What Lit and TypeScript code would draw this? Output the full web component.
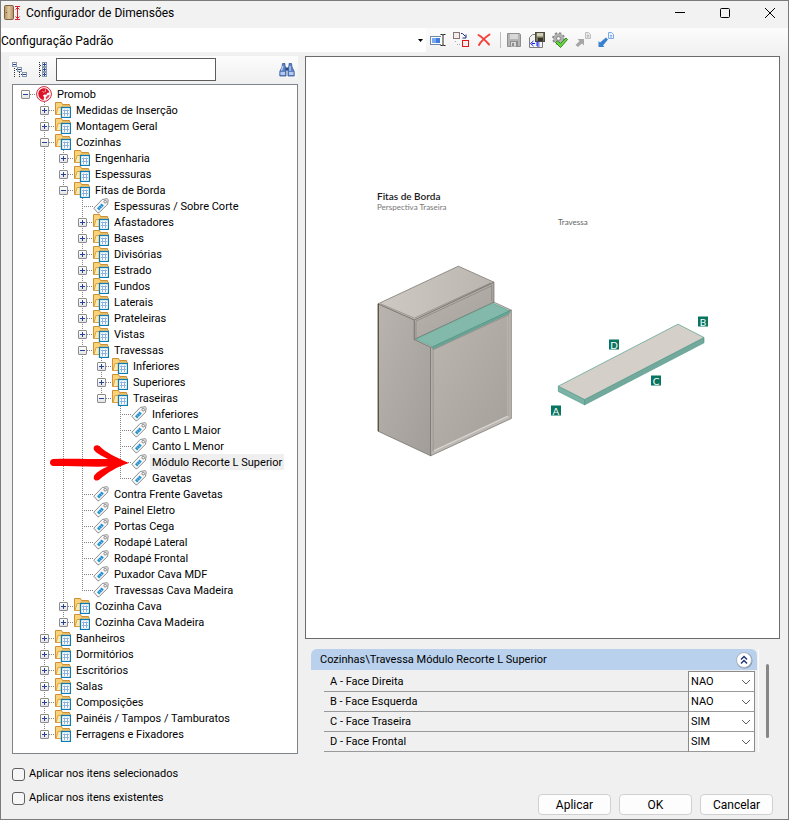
import { LitElement, html, css, svg, nothing } from "lit";
import { customElement, property, state } from "lit/decorators.js";

interface TreeNode {
  label: string;
  kind?: "root" | "folder" | "tag";
  open?: boolean;
  marked?: boolean;
  children?: TreeNode[];
}

const folder = (label: string): TreeNode => ({ label, kind: "folder" });
const group = (label: string, children: TreeNode[]): TreeNode => ({ label, kind: "folder", open: true, children });
const tag = (label: string, marked = false): TreeNode => ({ label, kind: "tag", marked });

const TREE: TreeNode = {
  label: "Promob",
  kind: "root",
  open: true,
  children: [
    folder("Medidas de Inserção"),
    folder("Montagem Geral"),
    group("Cozinhas", [
      folder("Engenharia"),
      folder("Espessuras"),
      group("Fitas de Borda", [
        tag("Espessuras / Sobre Corte"),
        folder("Afastadores"),
        folder("Bases"),
        folder("Divisórias"),
        folder("Estrado"),
        folder("Fundos"),
        folder("Laterais"),
        folder("Prateleiras"),
        folder("Vistas"),
        group("Travessas", [
          folder("Inferiores"),
          folder("Superiores"),
          group("Traseiras", [
            tag("Inferiores"),
            tag("Canto L Maior"),
            tag("Canto L Menor"),
            tag("Módulo Recorte L Superior", true),
            tag("Gavetas"),
          ]),
        ]),
        tag("Contra Frente Gavetas"),
        tag("Painel Eletro"),
        tag("Portas Cega"),
        tag("Rodapé Lateral"),
        tag("Rodapé Frontal"),
        tag("Puxador Cava MDF"),
        tag("Travessas Cava Madeira"),
      ]),
      folder("Cozinha Cava"),
      folder("Cozinha Cava Madeira"),
    ]),
    folder("Banheiros"),
    folder("Dormitórios"),
    folder("Escritórios"),
    folder("Salas"),
    folder("Composições"),
    folder("Painéis / Tampos / Tamburatos"),
    folder("Ferragens e Fixadores"),
  ],
};

const icon = (body: unknown, w = 16, h = 16) =>
  html`<svg width=${w} height=${h} viewBox="0 0 ${w} ${h}" aria-hidden="true">${body}</svg>`;

const folderArt = svg`
  <path d="M.5 12.500V.5h6l1 2h7v10z" fill="#f9d27a" stroke="#cf8f33"/>
  <path d="M1 12.500L3 5.500h3.500l1-1.500h8l-1.500 8.500z" fill="#fdeab0" stroke="#dba345"/>
  <rect x="6.500" y="5.500" width="9" height="10" fill="#fff" stroke="#0f7bb3" stroke-width="1.300"/>
  <path d="M8 8.500h6M8 11.500h6M9.500 7.500v6.500M12.500 7.500v6.500" stroke="#8fb2dd"/>`;

const tagArt = svg`
  <path d="M.8 10.200L9.200 1.500l5-.8 1 .9-.6 4.600L6.200 14.600 4.800 14.800z" fill="#f8f8f8" stroke="#8b8b8b" stroke-linejoin="round"/>
  <path d="M4 10.300l4.600-4.700 2.200 2-4.700 4.800z" fill="#2291cf"/>
  <path d="M5.600 8.800l2 2.200M7.200 7.200l2 2.100" stroke="#a9d8f2" stroke-width=".6"/>
  <rect x="11" y="2.500" width="2.400" height="2.400" rx=".8" fill="#fff" stroke="#777" stroke-width=".9"/>`;

const rootArt = svg`
  <circle cx="8" cy="8" r="7.400" fill="#fff" stroke="#cf2236"/>
  <path d="M9 2.200C5 1.800 2.200 4.500 2.300 8c.1 3.300 2.500 5.800 5.400 5.900L8 11 6.800 9.600 8.600 8.600 10.500 8.800 11 7l2.400-.4C13 4.200 11.300 2.500 9 2.200z" fill="#dc1428"/>
  <path d="M6.500 5.500l1.800 1M9.500 3.500l-.3 2.500" stroke="#fff" stroke-width=".7"/>
  <path d="M13.700 8.500l-2.500 1-1.500 2 .2 1.900c2-.8 3.600-2.700 3.800-4.900z" fill="#e2485a"/>`;

@customElement("dimension-node")
class DimensionNode extends LitElement {
  @property({ attribute: false }) node!: TreeNode;
  @property({ type: Boolean, reflect: true }) root = false;
  @state() private open = false;

  static styles = css`
    :host {
      display: block;
      background: repeating-linear-gradient(#848484 0 1px, transparent 1px 2px) 4px 0 / 1px 100% no-repeat;
    }
    :host([last]) { background-size: 1px 9px; }
    :host([root]) { background: none; }
    .row { display: flex; align-items: center; height: 16px; position: relative; }
    .box {
      width: 9px; height: 9px; padding: 0; border: 1px solid #8c8c8c; border-radius: 1px;
      background: linear-gradient(#fff, #e4e4e4); display: grid; place-items: center;
    }
    .twig { height: 1px; width: 6px; background: repeating-linear-gradient(90deg, #848484 0 1px, transparent 1px 2px); }
    .twig.leaf { width: 11px; margin-left: 4px; }
    svg { display: block; flex: none; }
    .label { height: 16px; line-height: 18px; padding: 0 2px; margin-left: 3px; white-space: nowrap; }
    .marked .label { background: #efefef; }
    .kids { margin-left: 19px; }
    .pointer { position: absolute; right: calc(100% + 2px); left: -66px; top: -10px; pointer-events: none; }
  `;

  firstUpdated() {
    this.open = !!this.node.open;
  }

  render() {
    const { node } = this;
    const art = node.kind === "root" ? rootArt : node.kind === "tag" ? tagArt : folderArt;
    const kids = node.children ?? [];
    return html`
      <div class="row ${node.marked ? "marked" : ""}" role="treeitem" aria-selected=${node.marked ? "true" : "false"}>
        ${node.kind === "tag"
          ? html`<span class="twig leaf"></span>`
          : html`<button class="box" aria-label="Expandir ${node.label}" @click=${() => (this.open = !this.open)}>
                ${icon(svg`<path d=${this.open ? "M1 3.500h5" : "M1 3.500h5M3.500 1v5"} stroke="#26439c"/>`, 7, 7)}
              </button><span class="twig"></span>`}
        ${icon(art)}
        <span class="label">${node.label}</span>
        ${node.marked
          ? html`<svg class="pointer" width="80" height="38" viewBox="0 0 80 38" aria-hidden="true">
              <path d="M3 15C25 14 45 15.500 58 15C51 11.500 46 9 44 6C42.500 2.500 46 0 49.500 2C55 8 66 13.500 79 19C67 22.500 57 29 49.500 35.500C46 38 42 35.500 44.500 31C48 27 53 24.500 58 22.500C42 23 22 22 3 22C-1 21.500 -1 15.500 3 15z" fill="#fe0000"/>
            </svg>`
          : nothing}
      </div>
      ${this.open && kids.length
        ? html`<div class="kids" role="group">
            ${kids.map((k, i) => html`<dimension-node .node=${k} ?last=${i === kids.length - 1}></dimension-node>`)}
          </div>`
        : nothing}
    `;
  }
}

const floppy = (body: string, dark: string, light: string) => svg`
  <path d="M1.500 1.500h12l1 1v12h-13z" fill=${body} stroke=${dark}/>
  <rect x="4" y="2" width="8" height="5" fill=${light}/>
  <rect x="4" y="9" width="8" height="5.500" fill=${dark}/>
  <rect x="5" y="10" width="5" height="4.500" fill=${light}/>
  <rect x="6" y="11" width="2" height="3" fill=${dark}/>`;

const TOOLS = [
  { name: "Renomear", art: svg`
    <rect x=".5" y="4.500" width="12" height="8" fill="#fff" stroke="#6f87a3"/>
    <rect x="2" y="6" width="8" height="5" fill="#3f7ee0"/><rect x="2" y="6" width="4" height="5" fill="#78a8ee"/>
    <rect x="11" y="3" width="4" height="10" fill="#fff"/>
    <path d="M10.500 2.500h2l.5 1 .5-1h2M13 3.500v9M10.500 13.500h2l.5-1 .5 1h2" stroke="#222" fill="none"/>` },
  { name: "Copiar", art: svg`
    <rect x=".5" y=".5" width="6" height="6" fill="#f3eeee" stroke="#8a7474"/>
    <rect x="9.500" y="8.500" width="6" height="6" fill="#f7eeee" stroke="#e01818"/>
    <path d="M8 1.500h1.500l3 3M13 2.500v3.500h-3.500" stroke="#18327e" fill="none"/>
    <path d="M2.500 9v2M4 12.500h3" stroke="#aaa" stroke-dasharray="1 1"/>` },
  { name: "Excluir", art: svg`
    <path d="M2.500 3c3.500 2 7 5.500 10.500 9.500M13.500 2.500C9 5.500 5.500 8.500 3 13" stroke="#f3423c" stroke-width="2" fill="none" stroke-linecap="round"/>` },
  null,
  { name: "Salvar", art: floppy("#b4b4b4", "#8e8e8e", "#d8d8d8") },
  { name: "Salvar como", art: svg`
    <path d="M.5 15.500v-10l3-3h10v13z" fill="#f3f3f3" stroke="#7d7d7d"/>
    <rect x="6.500" y=".5" width="9" height="9" fill="#77745c" stroke="#4b4a3c"/>
    <rect x="8" y="1" width="6" height="3.500" fill="#d0cdb8"/><rect x="9" y="6" width="5" height="3" fill="#33322a"/>
    <path d="M4.500 9L1.500 11.500l3 2.500M3 11.500h3M10.500 10h-2.500v4h2.500M8 12h2.500" stroke="#1724e8" fill="none"/>` },
  { name: "Validar", art: svg`
    <circle cx="6.500" cy="6.500" r="5.300" fill="#b5b5b5" stroke="#8a8a8a" stroke-width="2.200" stroke-dasharray="2.200 1.950"/>
    <circle cx="6.500" cy="6.500" r="4.800" fill="#b0b0b0"/><circle cx="6.500" cy="6.500" r="2" fill="#eee" stroke="#888"/>
    <path d="M3.500 10.500l2-1.500 3 2.500L14 6l1.500 1.500-7 8z" fill="#6bd63e" stroke="#2b8a1c"/>` },
  { name: "Importar", art: svg`
    <path d="M.5 13l4-4L2.500 7H9v6.500L7 11.500l-4 3.500z" fill="#a6a6a6"/>
    <path d="M10.500.5h3l2 2v4h-5z" fill="#e6e6e6" stroke="#c0c0c0"/><path d="M12 3.500h2M12 5h2" stroke="#b5b5b5"/>` },
  { name: "Exportar", art: svg`
    <path d="M.5 15V9L2 10.500 8 5.500l2 2L5 13.500 6.500 15z" fill="#3a80d0"/>
    <path d="M10.500.5h3l2 2v4h-5z" fill="#e9f2ff" stroke="#7fabe4"/><path d="M12 3.500h2M12 5h2" stroke="#7fabe4"/>` },
];

const minus = (x: number, y: number) => svg`
  <rect x=${x + 0.5} y=${y + 0.5} width="4" height="4" fill="#f5f8fc" stroke="#8799ac"/>
  <path d="M${x + 1} ${y + 2.5}h3" stroke="#26439c"/>`;
const plus = (y: number) => svg`${minus(5, y)}<path d="M7.500 ${y + 1}v3" stroke="#26439c"/>`;

const PROPS = [
  { id: "a", label: "A - Face Direita", value: "NAO" },
  { id: "b", label: "B - Face Esquerda", value: "NAO" },
  { id: "c", label: "C - Face Traseira", value: "SIM" },
  { id: "d", label: "D - Face Frontal", value: "SIM" },
];

const MARKS = [
  { t: "A", x: 551, y: 405 },
  { t: "B", x: 698, y: 316 },
  { t: "C", x: 651, y: 375 },
  { t: "D", x: 609, y: 339 },
];

@customElement("app-root")
class AppRoot extends LitElement {
  static styles = css`
    * { box-sizing: border-box; }
    :host {
      display: flex; flex-direction: column; min-height: 100vh; box-sizing: border-box;
      border: 1px solid #7b7b7b; background: #f0f0f0; color: #000;
      font: 11px/16px Roboto, "Liberation Sans", sans-serif;
    }
    svg { display: block; flex: none; }
    button, select, input { font: inherit; color: inherit; margin: 0; }
    .bare { border: 0; padding: 0; background: none; display: grid; place-items: center; }
    .title { display: flex; align-items: center; height: 27px; padding: 0 0 3px 3px; background: #f2f2f2; font-size: 12px; }
    .title h1 { font: inherit; margin: 0 0 0 5px; flex: 1; }
    .window { display: flex; gap: 9px; }
    .window .bare { width: 36px; height: 24px; }
    .strip { display: flex; align-items: flex-start; height: 28px; background: linear-gradient(#fcfcfc, #f0f0f0); }
    .combo { display: grid; width: 54%; height: 24px; background: #fff; align-items: center; }
    .combo select, .combo svg, .cell select, .cell svg { grid-area: 1 / 1; }
    .combo svg, .cell svg { justify-self: end; pointer-events: none; }
    .combo svg { margin-right: 3px; }
    .combo select { appearance: none; border: 0; padding: 2px 0 0; width: 100%; height: 24px; background: none; font-size: 12px; }
    .tools { display: flex; align-items: center; height: 24px; padding-left: 1px; }
    .tools .bare { width: 23px; height: 24px; }
    .sep { width: 1px; height: 16px; margin: 0 2px 0 4px; background: #bdbdbd; }
    main { flex: 1; display: grid; grid-template-columns: 289px minmax(0, 1fr); gap: 7px; padding: 0 8px; }
    .side { display: flex; flex-direction: column; }
    .find { display: flex; align-items: center; height: 28px; padding: 0 3px; gap: 9px; background: linear-gradient(#fcfcfc, #f0f0f0); }
    .find input { width: 160px; height: 23px; margin: 0 auto 2px 0; border: 1px solid #5c5c5c; background: #fff; padding: 0 4px; }
    .tree { flex: 1; margin-left: 3px; padding: 1px 0 8px 8px; border: 1px solid #7f848c; background: #fff; }
    .right { display: flex; flex-direction: column; gap: 10px; min-width: 0; }
    .preview { flex: 1; display: grid; min-height: 0; border: 1px solid #6b6b6b; background: #fff; }
    .preview svg { width: 100%; height: 100%; font-family: Lato, "Open Sans", sans-serif; }
    .details { display: flex; gap: 7px; padding: 0 11px 2px 6px; }
    .card { flex: 1; border-right: 1px solid #fff; padding-right: 1px; }
    .card h2 {
      display: flex; align-items: center; justify-content: space-between; margin: 0 0 2px; height: 21px;
      padding: 0 4px 0 9px; font: inherit; background: #b9d1ec; border-radius: 6px 6px 0 0;
    }
    table { width: calc(100% - 15px); margin-left: 13px; border-spacing: 0; table-layout: fixed; }
    th, td { height: 20px; padding: 0; border-bottom: 1px solid #999; line-height: 18px; }
    th { text-align: left; font-weight: 400; padding-left: 6px; }
    td { width: 67px; border-left: 1px solid #8a8a8a; border-right: 1px solid #8a8a8a; background: #fff; }
    tr:first-child td { box-shadow: 0 -1px #8a8a8a; }
    .cell { display: grid; align-items: center; height: 19px; }
    .cell select { appearance: none; border: 0; width: 100%; height: 18px; padding: 0 2px; background: none; }
    .cell svg { margin-right: 3px; }
    .thumb { width: 3px; margin: 15px 0 14px; border-radius: 2px; background: #868686; }
    footer { display: flex; align-items: flex-end; justify-content: space-between; padding: 12px 15px 4px 11px; }
    .checks { display: grid; gap: 8px; padding-bottom: 9px; }
    .checks label { display: flex; align-items: center; gap: 4px; }
    .checks input { appearance: none; width: 13px; height: 13px; border: 1px solid #5f5f5f; border-radius: 3px; background: #f6f6f6; }
    .actions { display: flex; gap: 8px; }
    .actions button { width: 73px; height: 21px; padding: 0; border: 1px solid #d0d0d0; border-radius: 4px; background: #fdfdfd; font-size: 12px; line-height: 18px; }
  `;

  render() {
    return html`
      <header class="title">
        ${icon(svg`
          <defs><linearGradient id="door"><stop stop-color="#b3905f"/><stop offset=".5" stop-color="#e0c9a2"/><stop offset="1" stop-color="#b08a5c"/></linearGradient></defs>
          <rect x=".5" y=".5" width="9" height="14" rx="1" fill="url(#door)" stroke="#7e6240"/>
          <path d="M2 7.500h1" stroke="#6b5030"/>
          <path d="M11 1.500h5M11 14.500h5M13.500 2v12M11.500 4.500l2-2 2 2M11.500 11.500l2 2 2-2" stroke="#dd1f2b" fill="none"/>`, 17, 16)}
        <h1>Configurador de Dimensões</h1>
        <div class="window">
          <button class="bare" aria-label="Minimizar">${icon(svg`<path d="M1 5.500h10" stroke="#000"/>`, 12, 12)}</button>
          <button class="bare" aria-label="Maximizar">${icon(svg`<rect x="1.500" y="1.500" width="9" height="9" rx="1" fill="none" stroke="#000"/>`, 12, 12)}</button>
          <button class="bare" aria-label="Fechar">${icon(svg`<path d="M1 1l10 10M11 1L1 11" stroke="#000"/>`, 12, 12)}</button>
        </div>
      </header>
      <div class="strip">
        <div class="combo">
          <select aria-label="Configuração"><option>Configuração Padrão</option></select>
          ${icon(svg`<path d="M0 0h5L2.500 3z"/>`, 5, 3)}
        </div>
        <div class="tools">
          ${TOOLS.map((t) => t
            ? html`<button class="bare" aria-label=${t.name}>${icon(t.art)}</button>`
            : html`<span class="sep"></span>`)}
        </div>
      </div>
      <main>
        <section class="side">
          <div class="find">
            <button class="bare" aria-label="Recolher tudo">${icon(svg`
              <path d="M2.500 6v10M4 7.500h4M7.500 8v8M9 12.500h2" stroke="#333" stroke-dasharray="1 1"/>
              ${minus(0, 0)}${minus(5, 5)}${minus(10, 10)}`)}</button>
            <button class="bare" aria-label="Expandir tudo">${icon(svg`
              <path d="M2.500 0v16M3 3.500h2M3 8.500h2M3 13.500h2" stroke="#333" stroke-dasharray="1 1"/>
              ${plus(0)}${plus(5)}${plus(10)}`, 10, 16)}</button>
            <input type="text" aria-label="Pesquisar" />
            <button class="bare" aria-label="Localizar">${icon(svg`
              <path d="M3.500 1.500h2.500v2l1 3V14H.8V9.500L3 5zM10 1.500h2.500l.5 3.500 2.200 4.500V14H9V6.500l1-3z" fill="#5c82c4" stroke="#3a5b9c" stroke-width=".8"/>
              <path d="M6.500 5.500h3v3h-3z" fill="#2b4a8c"/>
              <path d="M4 4L2.500 8.500M11 4v5" stroke="#bcd0f0" stroke-width="1.300"/>
              <rect x="1.500" y="10" width="4.500" height="3" fill="#b4c9ee"/><rect x="10" y="10" width="4.500" height="3" fill="#b4c9ee"/>`)}</button>
          </div>
          <div class="tree" role="tree" aria-label="Dimensões"><dimension-node root .node=${TREE}></dimension-node></div>
        </section>
        <section class="right">
          <div class="preview">
            <svg viewBox="306 57 473 580" role="img" aria-label="Perspectiva traseira do módulo">
              <defs>
                <linearGradient id="side" x1="0" y1="0" x2="1" y2="1"><stop stop-color="#b9b4af"/><stop offset="1" stop-color="#a19d98"/></linearGradient>
                <linearGradient id="back" x1="0" y1="0" x2="1" y2="1"><stop stop-color="#bcb6b1"/><stop offset="1" stop-color="#a39f99"/></linearGradient>
                <linearGradient id="top"><stop stop-color="#cfc9c3"/><stop offset="1" stop-color="#bbb5af"/></linearGradient>
              </defs>
              <text x="377" y="199" font-size="10" font-weight="600" fill="#1a1a1a">Fitas de Borda</text>
              <text x="377" y="209" font-size="8" fill="#777">Perspectiva Traseira</text>
              <text x="558" y="224" font-size="8" fill="#666">Travessa</text>
              <g transform="translate(360 180) scale(.33333)" stroke="#6a655f" stroke-width="2" stroke-linejoin="round">
                <path d="M54 370L163 418V477L212 500V826L54 752z" fill="url(#side)"/>
                <path d="M163 418L402 305V366L163 477z" fill="url(#back)"/>
                <path d="M54 370L295 257L402 305L163 418z" fill="url(#top)"/>
                <path d="M62 370L163 413L393 307" fill="none" stroke-width="1.500"/>
                <path d="M168 422V473M395 313V362M168 422L395 316" fill="none" stroke="#77716c" stroke-width="1.500"/>
                <path d="M55 370V752" stroke="#53432f" stroke-width="3"/>
                <path d="M212 500L454 389V714L212 826z" fill="#bdb8b3"/>
                <path d="M219 508L446 403V706L219 812z" fill="url(#back)" stroke="#77716c" stroke-width="1.500"/>
                <path d="M221 811L444 707" fill="none" stroke="#d9d5d1" stroke-width="4"/>
                <path d="M444 707V406" fill="none" stroke="#c3beb9" stroke-width="3"/>
                <path d="M163 477L402 365L454 389L212 500z" fill="#d5d1cc"/>
                <path d="M168 476L398 368L449 391L218 499z" fill="#82b9aa" stroke="#5aa090"/>
                <path d="M218 499L449 391V398L218 506z" fill="#6aa596" stroke="#4a9483" stroke-width="1.500"/>
              </g>
              <g transform="translate(540 200) scale(.33333)" stroke="#4b9787" stroke-width="2" stroke-linejoin="round">
                <path d="M55 557V573L134 613V597z" fill="#7db3a6"/>
                <path d="M134 597V613L492 427V411z" fill="#72a99c"/>
                <path d="M55 557L414 371L492 411L134 597z" fill="#d4cfc9"/>
              </g>
              ${MARKS.map((m) => svg`
                <rect x=${m.x} y=${m.y} width="10" height="10" fill="#077560"/>
                <text x=${m.x + 5} y=${m.y + 9} font-size="10" text-anchor="middle" fill="#fff">${m.t}</text>`)}
            </svg>
          </div>
          <div class="details">
            <div class="card">
              <h2>
                Cozinhas\\Travessa Módulo Recorte L Superior
                <button class="bare" aria-label="Recolher">${icon(svg`
                  <circle cx="9.500" cy="9.500" r="8" fill="#8593a8"/><circle cx="9" cy="9" r="7.500" fill="#fff" stroke="#aab4c4"/>
                  <path d="M6 8.500l3-3 3 3M6 12.500l3-3 3 3" fill="none" stroke="#1c2f70" stroke-width="1.400"/>`, 18, 18)}</button>
              </h2>
              <table>
                <colgroup><col /><col width="67" /></colgroup>
                <tbody>
                  ${PROPS.map((p) => html`<tr>
                    <th scope="row"><label for=${p.id}>${p.label}</label></th>
                    <td><div class="cell">
                      <select id=${p.id}>
                        <option ?selected=${p.value === "SIM"}>SIM</option>
                        <option ?selected=${p.value === "NAO"}>NAO</option>
                      </select>
                      ${icon(svg`<path d="M1 1l4 4 4-4" fill="none" stroke="#5c5c5c"/>`, 10, 6)}
                    </div></td>
                  </tr>`)}
                </tbody>
              </table>
            </div>
            <span class="thumb"></span>
          </div>
        </section>
      </main>
      <footer>
        <div class="checks">
          <label><input type="checkbox" />Aplicar nos itens selecionados</label>
          <label><input type="checkbox" />Aplicar nos itens existentes</label>
        </div>
        <div class="actions">
          <button>Aplicar</button>
          <button>OK</button>
          <button>Cancelar</button>
        </div>
      </footer>
    `;
  }
}
